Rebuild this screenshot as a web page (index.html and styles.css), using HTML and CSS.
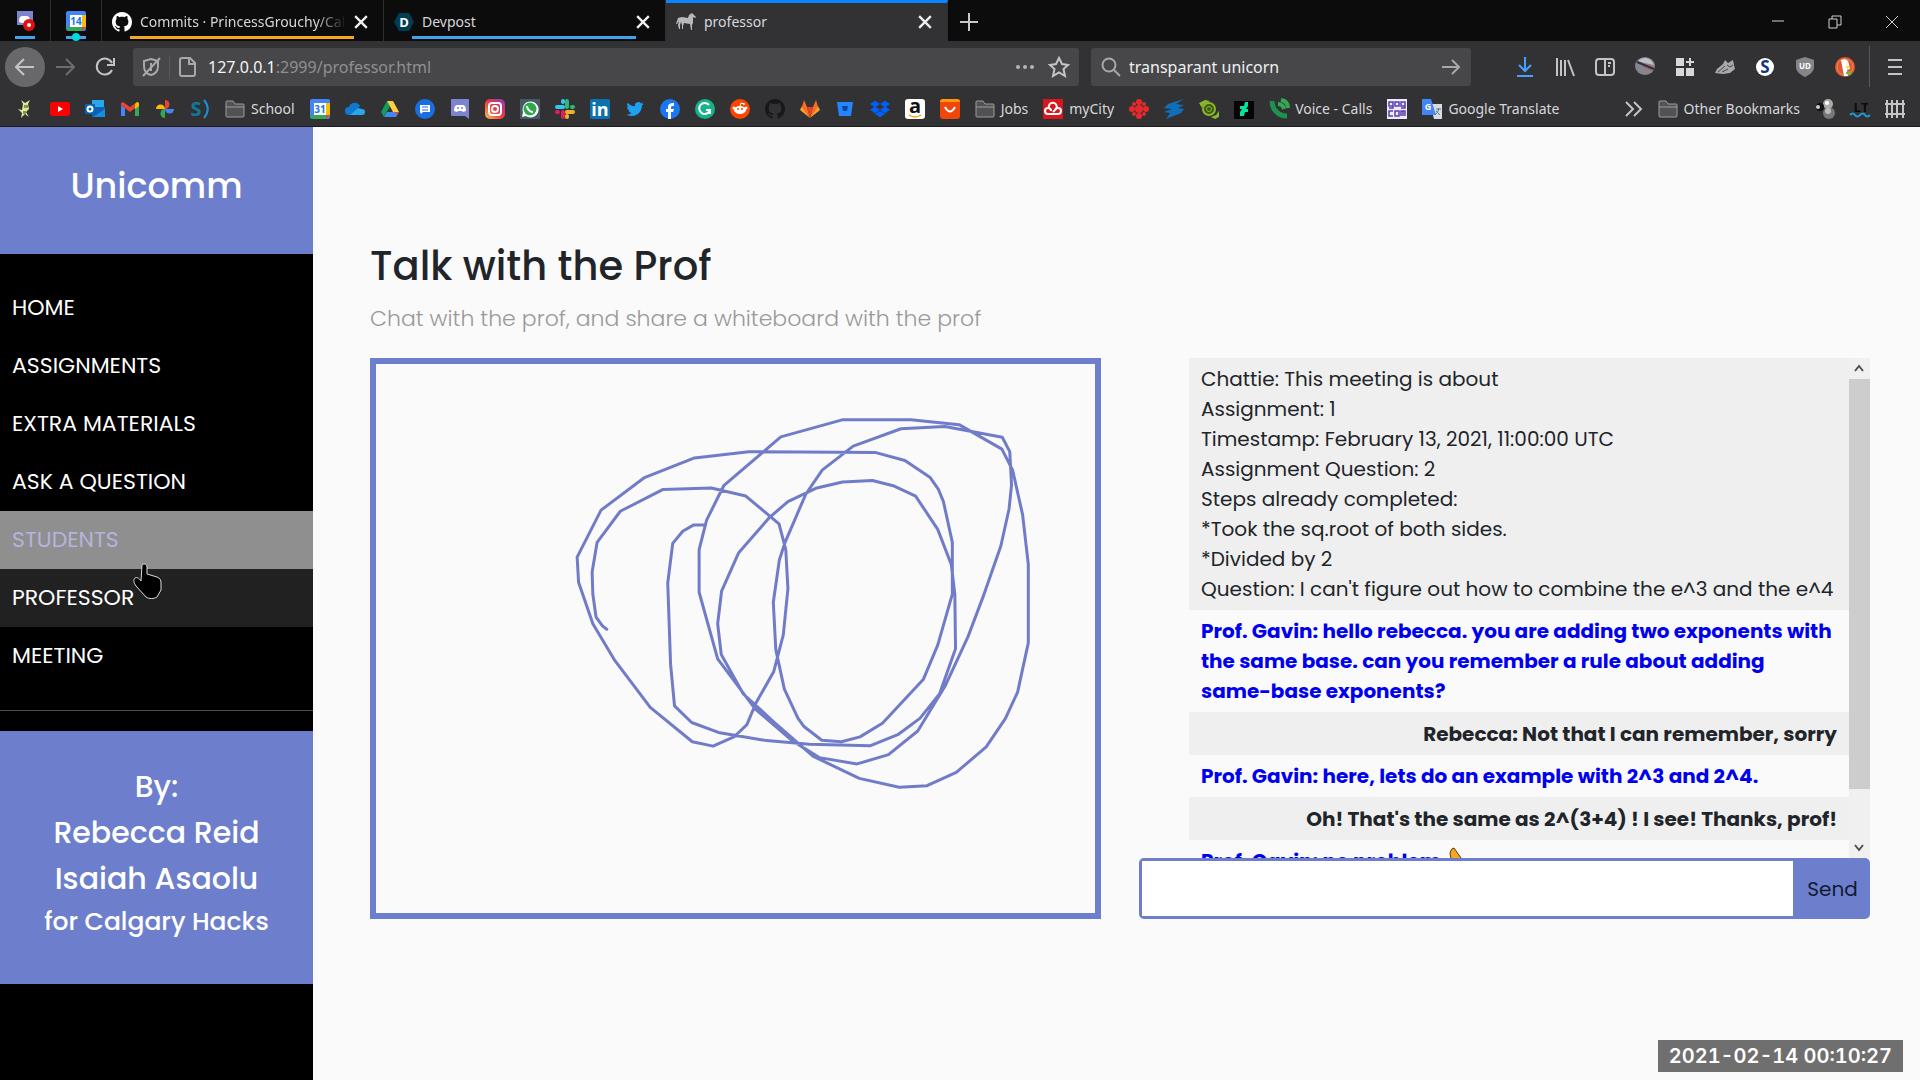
FILE: index.html
```html
<!DOCTYPE html>
<html lang="en">
<head>
    <meta charset="UTF-8">
    <meta name="viewport" content="width=device-width, initial-scale=1.0">
    <title>professor</title>
    <link rel="stylesheet" href="styles.css">
</head>
<body>
    <header class="browser">
        <div class="tabs">
            <div class="tab pinned">
                <svg class="icon" viewBox="0 0 20 20"><path fill="#7b85cf" d="M2 0h16v17l-3-3H2z"/><path fill="#fff" d="M4 11c0-4 1-6 3-6h5c2 0 3 2 3 6l-3 1H7z"/><circle cx="14" cy="14" r="6" fill="#e01010"/><circle cx="14" cy="14" r="2" fill="#fff"/></svg>
            </div>
            <div class="tab pinned">
                <svg class="icon" viewBox="0 0 20 20"><rect width="20" height="20" rx="2" fill="#4285f4"/><path fill="#fbbc04" d="M16 4h4v12h-4z"/><path fill="#34a853" d="M0 16h16v4H2z"/><path fill="#ea4335" d="M16 16h4l-4 4z"/><path fill="#fff" d="M4 4h12v12H4z"/><text class="glyph" x="10" y="14" font-size="10" fill="#1a73e8">14</text></svg>
                <span class="dot"></span>
            </div>
            <div class="tab amber">
                <svg class="icon github" viewBox="0 0 16 16"><path id="octocat" d="M8 0C3.58 0 0 3.58 0 8c0 3.54 2.29 6.53 5.47 7.59.4.07.55-.17.55-.38 0-.19-.01-.82-.01-1.49-2.01.37-2.53-.49-2.69-.94-.09-.23-.48-.94-.82-1.13-.28-.15-.68-.52-.01-.53.63-.01 1.08.58 1.23.82.72 1.21 1.87.87 2.33.66.07-.52.28-.87.51-1.07-1.78-.2-3.64-.89-3.64-3.95 0-.87.31-1.59.82-2.15-.08-.2-.36-1.02.08-2.12 0 0 .67-.21 2.2.82.64-.18 1.32-.27 2-.27s1.36.09 2 .27c1.53-1.04 2.2-.82 2.2-.82.44 1.1.16 1.92.08 2.12.51.56.82 1.27.82 2.15 0 3.07-1.87 3.75-3.65 3.95.29.25.54.73.54 1.48 0 1.07-.01 1.93-.01 2.2 0 .21.15.46.55.38A8.01 8.01 0 0 0 16 8c0-4.42-3.58-8-8-8z"/></svg>
                <span class="tab-title fade">Commits · PrincessGrouchy/Calgary</span>
                <button class="close" aria-label="Close tab"><svg viewBox="0 0 12 12"><path d="M1 1l10 10M11 1L1 11"/></svg></button>
            </div>
            <div class="tab">
                <svg class="icon" viewBox="0 0 20 20"><path fill="#003e54" d="M5 1h10l5 9-5 9H5l-5-9z"/><text class="glyph" x="10" y="15" font-size="13" fill="#fff">D</text></svg>
                <span class="tab-title">Devpost</span>
                <button class="close" aria-label="Close tab"><svg viewBox="0 0 12 12"><path d="M1 1l10 10M11 1L1 11"/></svg></button>
            </div>
            <div class="tab active">
                <svg class="icon" viewBox="0 0 20 20"><path fill="#b9b9b9" d="M2 6l4-1 6 1 1-3 3-2 4 4-1 1-2-1v6l-1 2v5h-1l-1-6-6-1-1 3v3H6v-4l-1-3-1 3v4H3l-1-4 1-4-2 3H0z"/></svg>
                <span class="tab-title">professor</span>
                <button class="close" aria-label="Close tab"><svg viewBox="0 0 12 12"><path d="M1 1l10 10M11 1L1 11"/></svg></button>
            </div>
            <button class="new-tab" aria-label="New tab"><svg viewBox="0 0 18 18"><path d="M9 0v18M0 9h18"/></svg></button>
            <div class="window-controls">
                <button aria-label="Minimize"><svg viewBox="0 0 14 14"><path d="M1 6h12"/></svg></button>
                <button aria-label="Restore"><svg viewBox="0 0 14 14"><path d="M1 4h8v9H1zM4 4V1h9v9H9"/></svg></button>
                <button aria-label="Close"><svg viewBox="0 0 14 14"><path d="M1 1l12 12M13 1L1 13"/></svg></button>
            </div>
        </div>

        <div class="toolbar">
            <button class="nav-button back" aria-label="Back"><svg viewBox="0 0 20 20"><path d="M19 10H2M9 2l-8 8 8 8"/></svg></button>
            <button class="nav-button forward" aria-label="Forward"><svg viewBox="0 0 20 20"><path d="M1 10h17M11 2l8 8-8 8"/></svg></button>
            <button class="nav-button" aria-label="Reload"><svg viewBox="0 0 20 20"><path d="M17 13a8 8 0 1 1 0-7M19 1v7h-7"/></svg></button>
            <div class="field url">
                <svg class="icon" viewBox="0 0 20 20"><path d="M10 2l7 2v5c0 5-3 8-7 9-4-1-7-4-7-9V4zM10 6v8M19 1L2 19"/></svg>
                <span class="divider"></span>
                <svg class="icon" viewBox="0 0 20 20"><path d="M4 1h8l5 5v11a2 2 0 0 1-2 2H4a2 2 0 0 1-2-2V3a2 2 0 0 1 2-2zM11 1v6h6"/></svg>
                <span class="address"><b>127.0.0.1</b>:2999/professor.html</span>
                <svg class="icon dots" viewBox="0 0 20 20"><circle cx="3" cy="10" r="2"/><circle cx="10" cy="10" r="2"/><circle cx="17" cy="10" r="2"/></svg>
                <svg class="icon star" viewBox="0 0 20 20"><path d="M10 1l3 6 6 1-4.500 4 1.500 7-6-3.500L4 19l1.500-7L1 8l6-1z"/></svg>
            </div>
            <div class="field search">
                <svg class="icon" viewBox="0 0 20 20"><circle cx="8" cy="8" r="6.500"/><path d="M13 13l6 6"/></svg>
                <input type="text" aria-label="Search" value="transparant unicorn">
                <svg class="icon" viewBox="0 0 20 20"><path d="M1 10h17M11 3l7 7-7 7"/></svg>
            </div>
            <div class="extensions">
                <svg class="icon line blue" viewBox="0 0 20 20"><path d="M10 0v14M4 8l6 6 6-6M2 19h16"/></svg>
                <svg class="icon line" viewBox="0 0 20 20"><path d="M2 1v18M6 3v16M10 3v16M13 3l6 16"/></svg>
                <svg class="icon line" viewBox="0 0 20 20"><rect x="1" y="2" width="18" height="16" rx="3"/><path d="M10 2v16M13 6h3M13 9h2"/></svg>
                <svg class="icon" viewBox="0 0 20 20"><ellipse cx="10" cy="9" rx="10" ry="9" fill="#85858f"/><path fill="#c0c0ca" d="M3 4c5-5 13-4 16 4l-9-2z"/><path d="M2 5l17 7" stroke="#30303a" stroke-width="2"/><path d="M8 9l9 4" stroke="#c04040"/></svg>
                <svg class="icon" viewBox="0 0 20 20"><path fill="#d7d7db" d="M1 1h8v8H1zM1 11h8v8H1zM11 11h8v8h-8zM14 1h2v3h3v2h-3v3h-2V6h-3V4h3z"/></svg>
                <svg class="icon" viewBox="0 0 20 20"><path fill="#a8a8a8" d="M8 7l2-4 3 3 5-3 1 5 1 4-5 4-7 1-8-1 2-4z"/><path fill="none" stroke="#444" d="M3 15l7-6M7 15l6-3M12 8l3 2 3-2"/></svg>
                <svg class="icon" viewBox="0 0 20 20"><circle cx="10" cy="10" r="9" fill="#fff"/><text class="glyph" x="10" y="16" font-size="17" fill="#12357f">S</text></svg>
                <svg class="icon" viewBox="0 0 20 20"><path fill="#85858a" d="M10 0l9 3v7c0 5-5 8-9 10-4-2-9-5-9-10V3z"/><text class="glyph" x="10" y="12" font-size="8" fill="#fff">UD</text></svg>
                <svg class="icon" viewBox="0 0 20 20"><circle cx="10" cy="10" r="10" fill="#de5833"/><circle cx="10" cy="10" r="8" fill="none" stroke="#f08a50"/><path fill="#fff" d="M6 3c4-2 8 0 8 5l1 4-3 1 1 6H9z"/><path fill="#fdd20a" d="M11 9l5 1-4 2z"/><path fill="#65bc46" d="M11 15l5-1v4l-5-1z"/></svg>
            </div>
            <span class="divider tall"></span>
            <button class="nav-button menu" aria-label="Menu"><svg viewBox="0 0 20 20"><path d="M3 3h14M3 10h14M3 17h14"/></svg></button>
        </div>

        <nav class="bookmarks" aria-label="Bookmarks">
            <a href="#" aria-label="Game"><svg class="icon" viewBox="0 0 20 20"><path fill="#dfe6a0" d="M8 5L6 1l4 3 5-3-2 4 1 5-3 3 3 5-4-3-4 4 1-5-4-4 4 1z"/><path fill="#79a13a" d="M9 6h4v3H9zM8 12h3v3H8z"/></svg></a>
            <a href="#" aria-label="YouTube"><svg class="icon" viewBox="0 0 20 20"><rect y="3" width="20" height="14" rx="3" fill="#f00"/><path fill="#fff" d="M8 7l5 3-5 3z"/></svg></a>
            <a href="#" aria-label="Outlook"><svg class="icon" viewBox="0 0 20 20"><path fill="#28a8ea" d="M7 1h12v8H7z"/><path fill="#0f5fb5" d="M7 8h13v10H7z"/><path fill="#1490df" d="M8 18l12-8v8z"/><path fill="#0364b8" d="M0 5h10v10H0z"/><circle cx="5" cy="10" r="2.500" fill="none" stroke="#fff" stroke-width="2"/></svg></a>
            <a href="#" aria-label="Gmail"><svg class="icon" viewBox="0 0 20 20"><path fill="#4285f4" d="M1 6l4 3v8H1z"/><path fill="#34a853" d="M15 9l4-3v11h-4z"/><path fill="#ea4335" d="M1 4l2-1 7 5 7-5 2 1v2l-9 7-9-7z"/><path fill="#fbbc04" d="M15 5l2-2 2 1v3l-4 3z"/></svg></a>
            <a href="#" aria-label="Photos"><svg class="icon" viewBox="0 0 20 20"><path fill="#fbbc04" d="M1 10a4 4 0 0 1 9 0z"/><path fill="#ea4335" d="M10 1a4 4 0 0 1 0 9z"/><path fill="#4285f4" d="M19 10a4 4 0 0 1-9 0z"/><path fill="#34a853" d="M10 19a4 4 0 0 1 0-9z"/></svg></a>
            <a href="#" aria-label="Schedule"><svg class="icon" viewBox="0 0 20 20"><text class="glyph" x="6" y="17" font-size="20" fill="#12789b">S</text><path fill="none" stroke="#1d8fd0" stroke-width="2" d="M14 1c5 6 5 12 0 18"/></svg></a>
            <a href="#"><svg class="icon folder" viewBox="0 0 20 20"><path d="M1 17V3a1 1 0 0 1 1-1h6l2 3h8a1 1 0 0 1 1 1v11a1 1 0 0 1-1 1H2a1 1 0 0 1-1-1zM1 8h18"/></svg>School</a>
            <a href="#" aria-label="Calendar"><svg class="icon" viewBox="0 0 20 20"><rect width="20" height="20" rx="2" fill="#4285f4"/><path fill="#fbbc04" d="M16 4h4v12h-4z"/><path fill="#34a853" d="M0 16h16v4H2z"/><path fill="#ea4335" d="M16 16h4l-4 4z"/><path fill="#fff" d="M4 4h12v12H4z"/><text class="glyph" x="10" y="14" font-size="10" fill="#1a73e8">31</text></svg></a>
            <a href="#" aria-label="OneDrive"><svg class="icon" viewBox="0 0 20 20"><path fill="#0f78d4" d="M4 16a4 4 0 0 1 0-8 6 6 0 0 1 11-1l-9 9z"/><path fill="#28a8ea" d="M5 16l8-7 4 1a3 3 0 0 1 0 6z"/></svg></a>
            <a href="#" aria-label="Drive"><svg class="icon" viewBox="0 0 20 20"><path fill="#0f9d58" d="M7 2l3 5-6 11-3-5z"/><path fill="#ffcd40" d="M7 2h6l6 11h-6z"/><path fill="#4285f4" d="M7 13h12l-3 5H4z"/><path fill="#ea4335" d="M15 13h4l-2 3z"/></svg></a>
            <a href="#" aria-label="Messages"><svg class="icon" viewBox="0 0 20 20"><circle cx="10" cy="10" r="10" fill="#1a6fe0"/><path fill="#fff" d="M5 6h10v7H8l-2 2-1-2z"/><path stroke="#1a73e8" d="M7 8h6M7 11h6"/></svg></a>
            <a href="#" aria-label="Discord"><svg class="icon" viewBox="0 0 20 20"><path fill="#7b85cf" d="M2 0h16a1 1 0 0 1 1 1v19l-4-3H2a1 1 0 0 1-1-1V1a1 1 0 0 1 1-1z"/><path fill="#fff" d="M4 12c0-4 1-6 3-6h6c2 0 3 2 3 6l-3 1-1-1H8l-1 1z"/><circle cx="8" cy="9" r="1" fill="#7b85cf"/><circle cx="12" cy="9" r="1" fill="#7b85cf"/></svg></a>
            <a href="#" aria-label="Instagram"><svg class="icon" viewBox="0 0 20 20"><defs><linearGradient id="insta" x1="0" y1="1" x2="1" y2="0"><stop offset="0" stop-color="#fdc04a"/><stop offset=".5" stop-color="#f0363f"/><stop offset="1" stop-color="#8a3ac8"/></linearGradient></defs><rect width="20" height="20" rx="5" fill="url(#insta)"/><rect x="4" y="4" width="12" height="12" rx="3" fill="none" stroke="#fff" stroke-width="2"/><circle cx="10" cy="10" r="3" fill="none" stroke="#fff" stroke-width="2"/></svg></a>
            <a href="#" aria-label="WhatsApp"><svg class="icon" viewBox="0 0 20 20"><path fill="#455a64" d="M0 0h20v20H0z"/><path fill="#fff" d="M2 18l1-5a8 8 0 1 1 3 4z"/><circle cx="10" cy="10" r="6.500" fill="#2ea84a"/><path d="M7 7c0 3 3 6 6 6" fill="none" stroke="#fff" stroke-width="2"/></svg></a>
            <a href="#" aria-label="Slack"><svg class="icon" viewBox="0 0 20 20"><g fill="none" stroke-width="4" stroke-linecap="round"><path stroke="#36c5f0" d="M2 8h6M8 2v1"/><path stroke="#2eb67d" d="M12 2v6M17 8h1"/><path stroke="#ecb22e" d="M12 13h6M12 17v1"/><path stroke="#e01e5a" d="M8 13v5M2 13h1"/></g></svg></a>
            <a href="#" aria-label="LinkedIn"><svg class="icon" viewBox="0 0 20 20"><rect width="20" height="20" rx="2" fill="#0a72b1"/><text class="glyph" x="10" y="17" font-size="18" fill="#fff">in</text></svg></a>
            <a href="#" aria-label="Twitter"><svg class="icon" viewBox="-2 -2 28 28"><path fill="#1da1f2" d="M23.953 4.570a10 10 0 01-2.825.775 4.958 4.958 0 002.163-2.723c-.951.555-2.005.959-3.127 1.184a4.920 4.920 0 00-8.384 4.482C7.690 8.095 4.067 6.130 1.640 3.162a4.822 4.822 0 00-.666 2.475c0 1.710.870 3.213 2.188 4.096a4.904 4.904 0 01-2.228-.616v.060a4.923 4.923 0 003.946 4.827 4.996 4.996 0 01-2.212.085 4.936 4.936 0 004.604 3.417 9.867 9.867 0 01-6.102 2.105c-.390 0-.779-.023-1.170-.067a13.995 13.995 0 007.557 2.209c9.053 0 13.998-7.496 13.998-13.985 0-.210 0-.420-.015-.630A9.935 9.935 0 0024 4.590z"/></svg></a>
            <a href="#" aria-label="Facebook"><svg class="icon" viewBox="0 0 20 20"><circle cx="10" cy="10" r="10" fill="#1877f2"/><path fill="#fff" d="M8 20v-7H6v-3h2V8c0-3 2-4 6-4v3c-2 0-3 0-3 1v2h3l-1 3h-2v7z"/></svg></a>
            <a href="#" aria-label="Grammarly"><svg class="icon" viewBox="0 0 20 20"><circle cx="10" cy="10" r="10" fill="#15b38a"/><path fill="none" stroke="#fff" stroke-width="2" d="M14 6a5.500 5.500 0 1 0 1 5h-4M15 11v4"/></svg></a>
            <a href="#" aria-label="Reddit"><svg class="icon" viewBox="0 0 20 20"><circle cx="10" cy="10" r="10" fill="#ff4500"/><ellipse cx="10" cy="11" rx="6" ry="4" fill="#fff"/><circle cx="4" cy="9" r="1.500" fill="#fff"/><circle cx="16" cy="9" r="1.500" fill="#fff"/><path d="M10 7l1-3 3 1" stroke="#fff" fill="none"/><circle cx="14" cy="5" r="1" fill="#fff"/><circle cx="8" cy="10" r="1" fill="#ff4500"/><circle cx="12" cy="10" r="1" fill="#ff4500"/></svg></a>
            <a href="#" aria-label="GitHub"><svg class="icon github dark" viewBox="0 0 16 16"><use href="#octocat"/></svg></a>
            <a href="#" aria-label="GitLab"><svg class="icon" viewBox="0 0 20 20"><path fill="#fca326" d="M0 11l2-4 8 12z"/><path fill="#fca326" d="M20 11l-2-4-8 12z"/><path fill="#fc6d26" d="M2 8h5l3 11zM18 8h-5l-3 11zM2 8l2-7 3 7zM18 8l-2-7-3 7z"/><path fill="#e24329" d="M7 8h6l-3 11z"/></svg></a>
            <a href="#" aria-label="Bitbucket"><svg class="icon" viewBox="0 0 20 20"><path fill="#2684ff" d="M2 3h16l-2 14H4z"/><path fill="#0747a6" d="M7 7h6l-1 5H8z"/></svg></a>
            <a href="#" aria-label="Dropbox"><svg class="icon" viewBox="0 0 24 24"><path fill="#0061ff" d="M6 2L0 6l6 4 6-4zM18 2l-6 4 6 4 6-4zM0 13l6 4 6-4-6-4zM18 9l-6 4 6 4 6-4zM6 18l6 4 6-4-6-4z"/></svg></a>
            <a href="#" aria-label="Amazon"><svg class="icon" viewBox="0 0 20 20"><rect width="20" height="20" rx="3" fill="#fff"/><text class="glyph" x="10" y="14" font-size="20" fill="#111">a</text><path d="M4 16q6 4 12 0" fill="none" stroke="#f90" stroke-width="1.500"/></svg></a>
            <a href="#" aria-label="AliExpress"><svg class="icon" viewBox="0 0 20 20"><rect width="20" height="20" rx="3" fill="#f0460a"/><path fill="#ff9a00" d="M3 0h14a3 3 0 0 1 3 3H0a3 3 0 0 1 3-3z"/><path d="M5 8q5 9 10 0" fill="none" stroke="#fff" stroke-width="2"/></svg></a>
            <a href="#"><svg class="icon folder" viewBox="0 0 20 20"><path d="M1 17V3a1 1 0 0 1 1-1h6l2 3h8a1 1 0 0 1 1 1v11a1 1 0 0 1-1 1H2a1 1 0 0 1-1-1zM1 8h18"/></svg>Jobs</a>
            <a href="#"><svg class="icon" viewBox="0 0 20 20"><path fill="#d9161c" d="M0 0h20v20H0z"/><path fill="none" stroke="#fff" stroke-width="2" d="M8 12a3 3 0 1 0-3 3h10a3 3 0 1 0-3-3M6 9a4 4 0 1 1 7 1l-3 3"/></svg>myCity</a>
            <a href="#" aria-label="CBC"><svg class="icon" viewBox="0 0 20 20"><g fill="#e62a2a"><circle cx="10" cy="10" r="4"/><circle cx="10" cy="3" r="3"/><circle cx="10" cy="17" r="3"/><circle cx="3" cy="10" r="3"/><circle cx="17" cy="10" r="3"/><circle cx="5" cy="5" r="2"/><circle cx="15" cy="5" r="2"/><circle cx="5" cy="15" r="2"/><circle cx="15" cy="15" r="2"/></g></svg></a>
            <a href="#" aria-label="Sync"><svg class="icon" viewBox="0 0 20 20"><path fill="#0f6fb8" d="M20 0L4 5l-4 4 8 1-8 3 6 1-4 6 15-6 3-4-6-1 6-3-8-1z"/></svg></a>
            <a href="#" aria-label="Turtle"><svg class="icon" viewBox="0 0 20 20"><circle cx="10" cy="10" r="6" fill="#3c5a10" stroke="#8ab829" stroke-width="2"/><circle cx="10" cy="10" r="2.500" fill="none" stroke="#8ab829"/><path fill="#8ab829" d="M0 4l6-3 5 1-7 4-1 3zM20 12v6l-4 2-4-2 5-2z"/></svg></a>
            <a href="#" aria-label="DeviantArt"><svg class="icon" viewBox="0 0 20 20"><path fill="#050505" d="M0 2h20v18H0z"/><path fill="#05e39c" d="M11 3h3v4l-2 3h2v3h-3l-1 4H6v-4l2-3H6V7h4z"/></svg></a>
            <a href="#"><svg class="icon" viewBox="0 0 20 20"><path fill="none" stroke="#1e9150" stroke-width="5" d="M3 2c0 8 6 15 15 15"/><path fill="none" stroke="#34a853" stroke-width="4" d="M9 5q5 0 6 5M12 1q7 1 7 8"/></svg>Voice - Calls</a>
            <a href="#" aria-label="GOG"><svg class="icon" viewBox="0 0 20 20"><path fill="#efeaff" d="M0 0h20v20H0z"/><g fill="none" stroke="#5a3fae" stroke-width="1.500"><path d="M2 3h4v4H2zM8 3h4v4H8zM14 3h4v4h-4zM6 7v2H2M18 7v2h-4M6 12H2v5h4M8 12h4v5H8zM14 17v-5h4v5M16 12v5"/></g></svg></a>
            <a href="#"><svg class="icon" viewBox="0 0 20 20"><path fill="#d8dbe0" d="M8 5h12v15h-8z"/><path fill="#4285f4" d="M0 0h9l5 16H0z"/><text class="glyph" x="6" y="11" font-size="9" fill="#fff">G</text><path d="M14 10h5M17 9q-1 5-4 7M14 12l4 4" stroke="#607d8b" fill="none"/></svg>Google Translate</a>
            <a href="#" class="more" aria-label="More bookmarks"><svg class="icon line" viewBox="0 0 20 20"><path d="M3 3l7 7-7 7M11 3l7 7-7 7"/></svg></a>
            <a href="#"><svg class="icon folder" viewBox="0 0 20 20"><path d="M1 17V3a1 1 0 0 1 1-1h6l2 3h8a1 1 0 0 1 1 1v11a1 1 0 0 1-1 1H2a1 1 0 0 1-1-1zM1 8h18"/></svg>Other Bookmarks</a>
            <a href="#" aria-label="Spheres"><svg class="icon" viewBox="0 0 20 20"><circle cx="14" cy="14" r="6" fill="#777"/><circle cx="13" cy="5" r="5" fill="#aaa"/><circle cx="12" cy="4" r="2" fill="#fff"/><circle cx="5" cy="8" r="4" fill="#111"/><circle cx="3" cy="8" r="2" fill="#ccc"/><circle cx="13" cy="12" r="3" fill="#bbb"/></svg></a>
            <a href="#" aria-label="LanguageTool"><svg class="icon" viewBox="0 0 20 20"><text class="glyph" x="11" y="13" font-size="13" fill="#0b0b0b">LT</text><path d="M0 16q3-3 5 0t5 0 5 0 5 0" fill="none" stroke="#1f9bd8" stroke-width="2"/></svg></a>
            <a href="#" aria-label="Fence"><svg class="icon line" viewBox="0 0 20 20"><path d="M2 1v18M7 1v18M12 1v18M18 1v18M0 5h20M0 15h20"/></svg></a>
        </nav>
    </header>

    <div class="wrapper">
        <aside class="sidebar">
            <div class="sidebar-header">
                <h3>Unicomm</h3>
            </div>
            <ul class="components">
                <li><a href="#">HOME</a></li>
                <li><a href="#">ASSIGNMENTS</a></li>
                <li><a href="#">EXTRA MATERIALS</a></li>
                <li><a href="#">ASK A QUESTION</a></li>
                <li class="hovered"><a href="#">STUDENTS</a>
                    <svg class="cursor" viewBox="0 0 29 36"><path d="M9 2c2-2 5-1 5 2v7l10 3c3 1 4 3 4 6v7l-4 7c-3 2-8 2-11 0L3 23c-2-3-3-6-1-8 2-1 4 0 6 3z"/></svg>
                </li>
                <li class="active"><a href="#">PROFESSOR</a></li>
                <li><a href="#">MEETING</a></li>
            </ul>
            <div class="credits">
                <h4>By:</h4>
                <h4>Rebecca Reid</h4>
                <h4>Isaiah Asaolu</h4>
                <h5>for Calgary Hacks</h5>
            </div>
        </aside>

        <main class="content">
            <h2>Talk with the Prof</h2>
            <p class="lead">Chat with the prof, and share a whiteboard with the prof</p>
            <div class="columns">
                <div class="whiteboard">
                    <svg viewBox="-515 38 2016 1484" preserveAspectRatio="none">
                        <polyline points="408,473 376,473 345,490 317,523 303,630 311,850 322,962 370,1007 445,1034 580,1056 700,1066 870,1070 948,1040 1010,996 1065,930 1110,808 1108,660 1098,580 1060,485 998,395 935,367 877,353 793,357 718,374 640,410 588,453 502,548 454,652 443,740 453,823 515,930 600,1005 710,1098 840,1158 952,1182 1030,1178 1112,1142 1196,1073 1250,996 1284,925 1314,792 1314,580 1298,445 1270,325 1240,268 1120,202 985,189 792,189 620,235 460,367 412,460 391,540 391,655 443,835 548,970 650,1055 728,1102 834,1119 922,1094 1004,1030 1080,910 1145,775 1190,660 1237,530 1260,430 1267,365 1262,275 1241,236 1080,207 957,213 823,260 736,325 690,390 632,520 616,568 599,682 606,810 630,917 668,995 685,1018 735,1055 790,1059 842,1046 905,1009 1020,890 1060,798 1101,660 1101,520 1076,410 1062,377 1038,344 968,299 884,277 530,275 378,292 236,346 116,433 49,560 53,628 93,740 155,840 254,966 372,1059 430,1071 490,1045 525,1013 550,955 600,870 627,770 640,645 634,540 615,470 522,395 425,373 290,377 170,436 105,520 91,600 93,660 102,722 120,746 132,755"/>
                    </svg>
                </div>
                <div class="chat">
                    <div class="log">
                        <ul class="messages">
                            <li class="info">Chattie: This meeting is about<br>Assignment: 1<br>Timestamp: February 13, 2021, 11:00:00 UTC<br>Assignment Question: 2<br>Steps already completed:<br>*Took the sq.root of both sides.<br>*Divided by 2<br>Question: I can't figure out how to combine the e^3 and the e^4</li>
                            <li class="prof">Prof. Gavin: hello rebecca. you are adding two exponents with the same base. can you remember a rule about adding same-base exponents?</li>
                            <li class="student">Rebecca: Not that I can remember, sorry</li>
                            <li class="prof">Prof. Gavin: here, lets do an example with 2^3 and 2^4.</li>
                            <li class="student">Oh! That's the same as 2^(3+4) ! I see! Thanks, prof!</li>
                            <li class="prof">Prof. Gavin: no problem <svg class="emoji" viewBox="0 0 20 20"><path fill="#f5a623" stroke="#5c3a00" d="M5 7q1-5 4-5l7 10-1 7-8-1z"/></svg></li>
                        </ul>
                        <div class="scrollbar">
                            <svg viewBox="0 0 21 21"><path d="M6 13l4-5 4 5"/></svg>
                            <div class="thumb"></div>
                            <svg viewBox="0 0 21 21"><path d="M6 8l4 5 4-5"/></svg>
                        </div>
                    </div>
                    <form class="composer" onsubmit="return false">
                        <input type="text" aria-label="Message" autocomplete="off">
                        <button>Send</button>
                    </form>
                </div>
            </div>
        </main>
    </div>
    <div class="timestamp">2021-02-14 00:10:27</div>
</body>
</html>
```
FILE: styles.css
```css
* {
    box-sizing: border-box;
}

body {
    font-family: Poppins, Inter, sans-serif;
    font-size: 20px;
    line-height: 30px;
    margin: 0;
    min-height: 100vh;
    display: flex;
    flex-direction: column;
    position: relative;
    background: #fafafa;
    color: #212529;
}

button,
input {
    font: inherit;
    color: inherit;
    border: none;
    background: none;
    padding: 0;
}

a {
    color: inherit;
    text-decoration: none;
}

ul {
    list-style: none;
    margin: 0;
    padding: 0;
}

/* browser bars */
.browser {
    font-family: "Segoe UI", "Noto Sans", sans-serif;
    font-size: 14px;
    line-height: 20px;
    background: #323234;
    color: #d7d7db;
    border-bottom: 1px solid #1c1c1e;
}

.icon {
    width: 20px;
    height: 20px;
    flex-shrink: 0;
    display: block;
    overflow: visible;
}

.glyph {
    font-family: "Open Sans", sans-serif;
    font-weight: bold;
    text-anchor: middle;
}

.tabs {
    display: flex;
    height: 41px;
    background: #0c0c0d;
}

.tab {
    position: relative;
    flex: 0 1 282px;
    min-width: 0;
    display: flex;
    align-items: center;
    gap: 8px;
    padding: 2px 15px 0 10px;
    border-right: 1px solid #2d2d30;
}

.tab.pinned {
    flex: 0 0 51px;
    padding: 0 15px;
}

.tab::after {
    content: "";
    position: absolute;
    left: 28px;
    right: 29px;
    bottom: 2px;
    height: 3px;
    background: #45a1e8;
}

.tab.pinned::after {
    left: 15px;
    right: 15px;
}

.tab.amber::after {
    background: #f5a623;
}

.tab.active {
    background: #323234;
    border-top: 3px solid #0a84ff;
    padding-top: 0;
}

.tab.active::after {
    display: none;
}

.dot {
    position: absolute;
    z-index: 1;
    left: 21px;
    bottom: 0;
    width: 8px;
    height: 8px;
    border-radius: 50%;
    background: #00d8e0;
}

.tab-title {
    flex: 1;
    min-width: 0;
    white-space: nowrap;
    overflow: hidden;
}

.fade {
    mask-image: linear-gradient(to right, #000 85%, transparent);
}

.close svg {
    display: block;
    width: 14px;
    height: 14px;
    stroke: #f0f0f0;
    stroke-width: 2;
}

.new-tab {
    width: 42px;
}

.new-tab svg {
    width: 18px;
    height: 18px;
    stroke: #c8c8cc;
    stroke-width: 2;
    vertical-align: middle;
}

.window-controls {
    margin-left: auto;
    display: flex;
}

.window-controls button {
    width: 57px;
}

.window-controls svg {
    width: 14px;
    height: 14px;
    fill: none;
    stroke: #d0d0d0;
    vertical-align: middle;
}

.toolbar {
    display: flex;
    align-items: center;
    height: 51px;
    padding-left: 5px;
}

.nav-button {
    flex-shrink: 0;
    width: 40px;
    height: 40px;
    border-radius: 50%;
    display: flex;
    align-items: center;
    justify-content: center;
}

.nav-button svg {
    width: 20px;
    height: 20px;
}

.nav-button svg,
.field .icon,
.line {
    fill: none;
    stroke: #c4c4c8;
    stroke-width: 2;
}

.back {
    background: #68686b;
}

.forward {
    opacity: 0.4;
}

.menu {
    width: 50px;
}

.field {
    min-width: 0;
    display: flex;
    align-items: center;
    gap: 8px;
    height: 38px;
    border-radius: 3px;
    background: #474749;
    padding: 0 10px;
}

.field .icon {
    stroke: #a8a8ac;
}

.field .star {
    stroke: #c4c4c8;
}

.url {
    flex: 946 1 946px;
    margin: 0 12px 0 8px;
    padding-left: 8px;
}

.search {
    flex: 380 1 380px;
}

.search input {
    flex: 1;
    min-width: 0;
    font-size: 16px;
    color: #f0f0f2;
}

.divider {
    width: 1px;
    height: 24px;
    background: #57575a;
}

.divider.tall {
    height: 41px;
    margin-left: 14px;
}

.address {
    flex: 1;
    font-size: 16px;
    color: #8f8f93;
    padding-left: 2px;
}

.address b {
    color: #f4f4f6;
    font-weight: normal;
}

.field .dots {
    fill: #b4b4b8;
    stroke: none;
    margin-right: 6px;
}

.extensions {
    display: flex;
    gap: 20px;
    margin-left: 44px;
}

.extensions .blue {
    stroke: #45a1ff;
}

.bookmarks {
    display: flex;
    align-items: center;
    gap: 15px;
    height: 34px;
    padding: 0 15px;
    white-space: nowrap;
}

.bookmarks a {
    display: flex;
    align-items: center;
    gap: 6px;
}

.bookmarks .more {
    margin-left: auto;
}

.folder {
    fill: #525254;
    stroke: #9c9ca0;
    stroke-width: 1;
}

.github {
    fill: #fff;
}

.github.dark {
    fill: #18181a;
}

/* page */
.wrapper {
    flex: 1;
    display: flex;
}

.sidebar {
    flex: 0 0 313px;
    background: #000;
    color: #fff;
}

.sidebar-header,
.credits {
    background: #6d7fcc;
    padding: 38px 20px 47px;
    text-align: center;
}

h2,
h3,
h4,
h5 {
    margin: 0;
    font-weight: 500;
}

h3 {
    font-size: 35px;
    line-height: 42px;
}

h4 {
    font-size: 30px;
    line-height: 36px;
    margin-bottom: 10px;
}

h5 {
    font-size: 25px;
    line-height: 30px;
}

.components {
    padding: 25px 0;
    margin-bottom: 20px;
    border-bottom: 1px solid #4c5054;
}

.components li {
    position: relative;
}

.components a {
    display: block;
    padding: 14px 12px;
    font-size: 22px;
}

.components .hovered {
    background: #8f8f8f;
    color: #b4b4dc;
}

.components .active {
    background: #212121;
}

.cursor {
    position: absolute;
    z-index: 1;
    left: 133px;
    top: 52px;
    width: 29px;
    height: 36px;
    stroke: #ddd;
}

.content {
    flex: 1;
    min-width: 0;
    padding: 115px 50px 50px 57px;
}

h2 {
    font-size: 40px;
    line-height: 48px;
    margin-bottom: 12px;
}

.lead {
    margin: 0 0 23px;
    font-size: 22px;
    line-height: 33px;
    font-weight: 300;
    color: #999;
}

.columns {
    display: grid;
    grid-template-columns: 1fr 1fr;
    gap: 38px;
    height: 561px;
}

.whiteboard {
    border: 6px solid #6d7fcc;
    min-height: 0;
}

.whiteboard svg {
    display: block;
    width: 100%;
    height: 100%;
}

.whiteboard polyline {
    fill: none;
    stroke: #717cc8;
    stroke-width: 3px;
    stroke-linejoin: round;
    stroke-linecap: round;
    vector-effect: non-scaling-stroke;
}

.chat {
    display: flex;
    flex-direction: column;
    min-height: 0;
}

.log {
    flex: 1;
    min-height: 0;
    display: flex;
    padding-left: 50px;
}

.messages {
    flex: 1;
    overflow: hidden;
}

.messages li {
    padding: 6px 12px;
}

.info,
.student {
    background: #efefef;
}

.prof,
.student {
    font-weight: 700;
}

.prof {
    color: #0000f0;
}

.messages .student {
    padding-top: 7px;
    text-align: right;
}

.emoji {
    width: 20px;
    height: 20px;
    vertical-align: top;
}

.scrollbar {
    flex: 0 0 21px;
    display: flex;
    flex-direction: column;
    background: #f0f0f0;
}

.scrollbar svg {
    width: 21px;
    height: 21px;
    fill: none;
    stroke: #505050;
    stroke-width: 2;
}

.thumb {
    height: 82%;
    background: #cdcdcd;
    margin-bottom: auto;
}

.composer {
    display: flex;
    height: 61px;
    border: 3px solid #6d7fcc;
    border-radius: 5px;
    background: #6d7fcc;
}

.composer input {
    flex: 1;
    min-width: 0;
    padding: 0 12px;
    background: #fff;
}

.composer button {
    width: 74px;
    padding-left: 5px;
    color: #111a33;
}

.timestamp {
    position: absolute;
    right: 17px;
    bottom: 8px;
    padding: 1px 11px;
    background: #6f6f6f;
    color: #fff;
    font-family: Inter, sans-serif;
    font-size: 20px;
    font-weight: 600;
    font-variant-numeric: tabular-nums;
}
```
